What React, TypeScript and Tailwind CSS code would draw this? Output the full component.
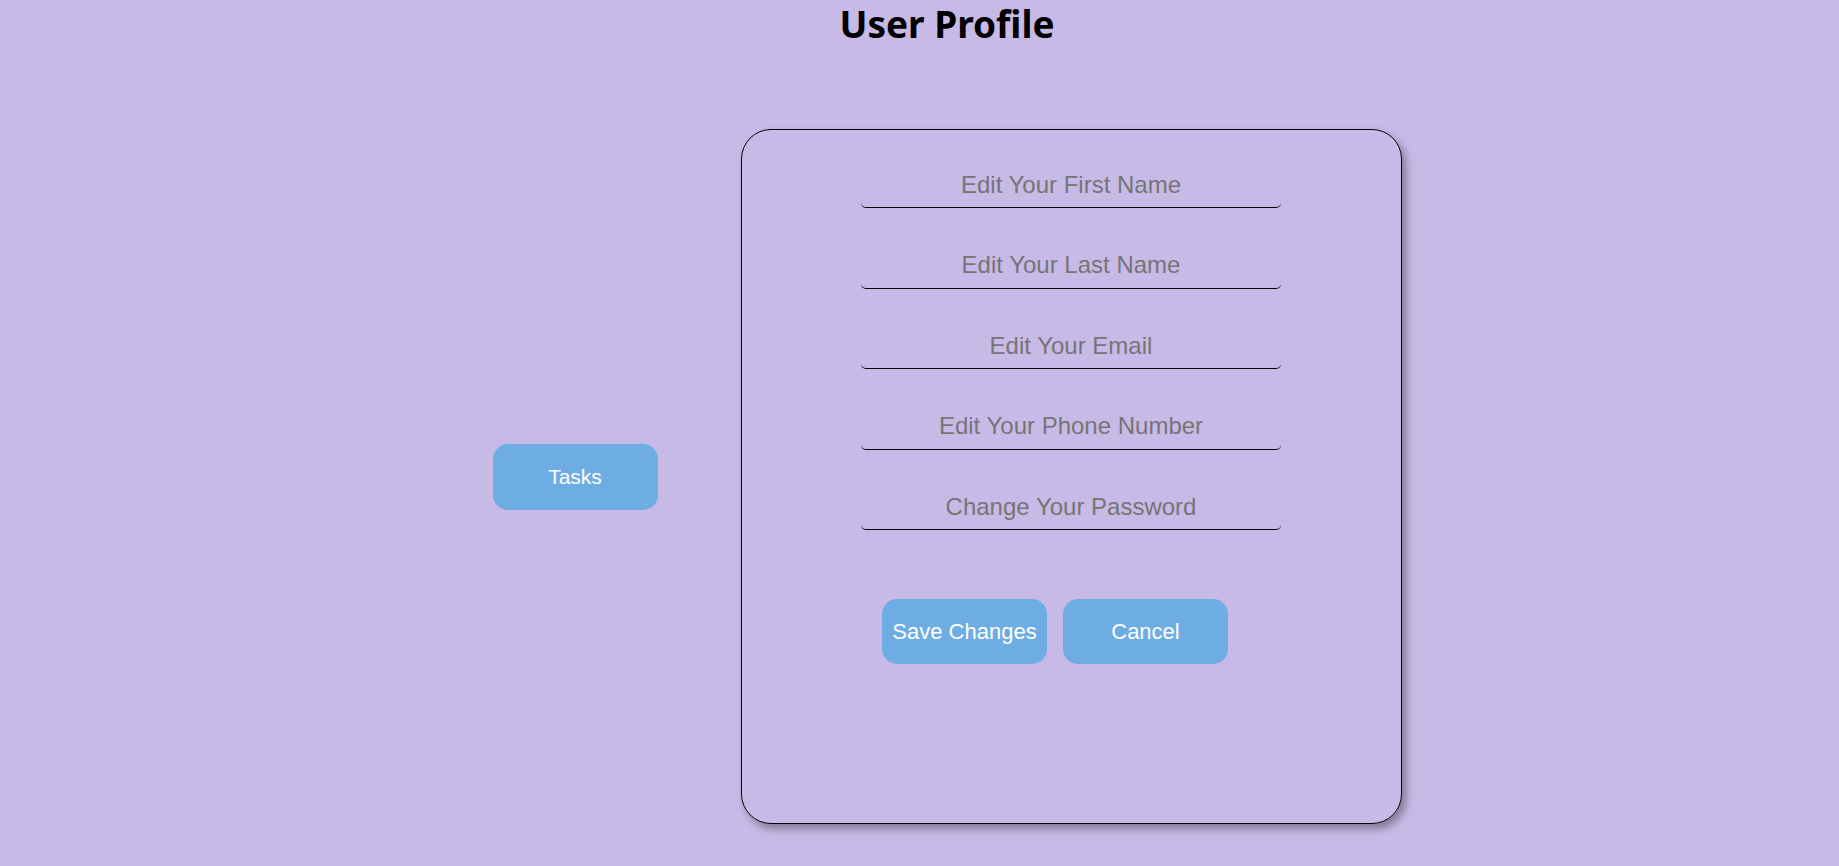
const fields = [
  "Edit Your First Name",
  "Edit Your Last Name",
  "Edit Your Email",
  "Edit Your Phone Number",
  "Change Your Password",
];

const App = () => {
  return (
    <div className="min-h-[866px] w-full bg-[#c8bae7] pl-[55px]" style={{ fontFamily: "'Liberation Sans', Arial, sans-serif" }}>
      <h1 className="text-center text-[37px] font-bold leading-[48px] text-black" style={{ fontFamily: "'Noto Sans', sans-serif" }}>
        User Profile
      </h1>

      <div className="mt-[81px] flex items-center justify-center gap-[83px]">
        <button className="h-[66px] w-[165px] rounded-[15px] bg-[#6eace4] text-[21px] text-white">
          Tasks
        </button>

        <div className="flex h-[695px] w-[661px] flex-col items-center rounded-[30px] border border-black pt-[38px] shadow-[4px_5px_8px_rgba(0,0,0,0.35)]">
          <div className="flex flex-col gap-[40.5px]">
            {fields.map((f) => (
              <input
                key={f}
                type="text"
                placeholder={f}
                className="h-[40px] w-[420px] rounded-[5px] border-b border-black bg-transparent pb-[6px] text-center text-[24px] text-black outline-none placeholder:text-[#757575]"
              />
            ))}
          </div>

          <div className="mt-[69px] mr-[32px] flex gap-[16px]">
            <button className="h-[65px] w-[165px] rounded-[15px] bg-[#6eace4] text-[22px] text-white">
              Save Changes
            </button>
            <button className="h-[65px] w-[165px] rounded-[15px] bg-[#6eace4] text-[22px] text-white">
              Cancel
            </button>
          </div>
        </div>
      </div>
    </div>
  );
};

export default App;
